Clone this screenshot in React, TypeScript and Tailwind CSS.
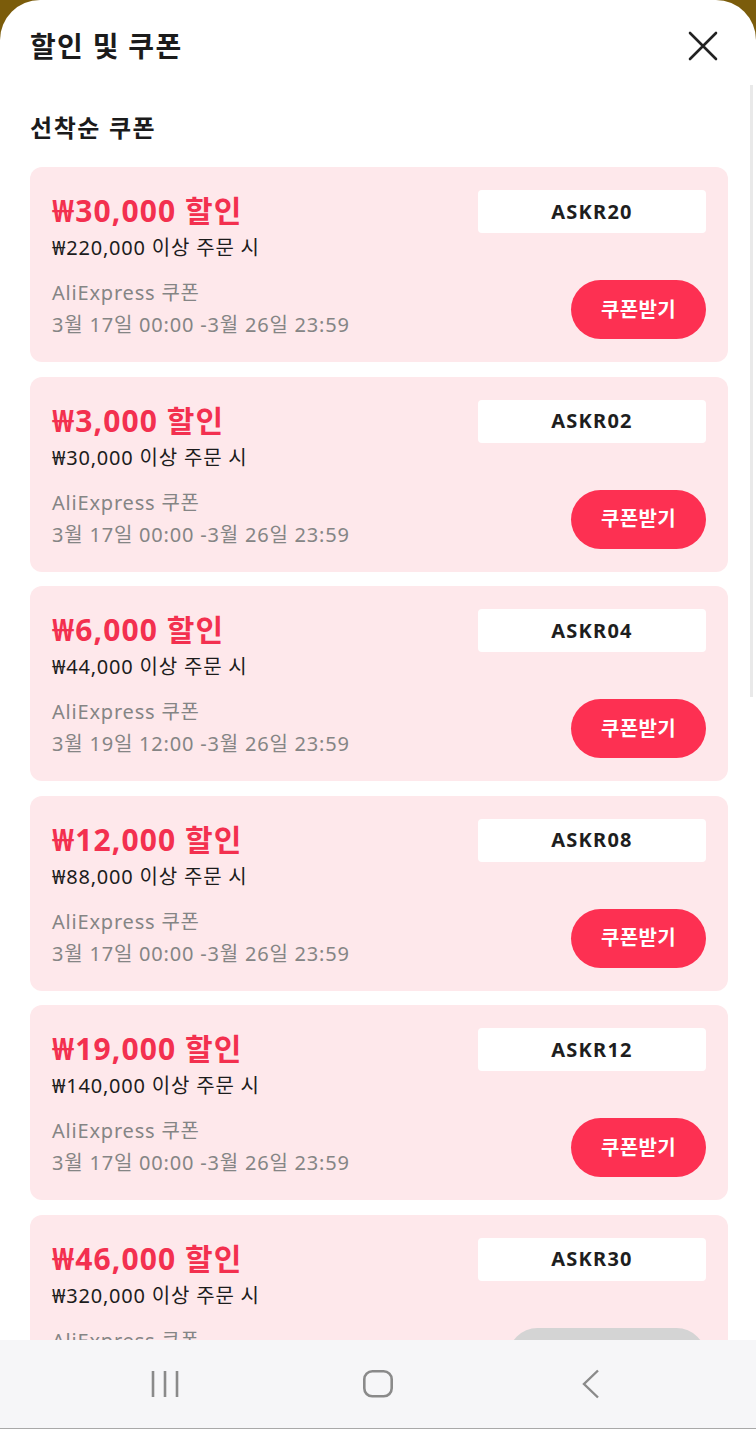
const coupons = [
  { amount: '₩30,000 할인', min: '₩220,000 이상 주문 시', code: 'ASKR20', period: '3월 17일 00:00 -3월 26일 23:59', active: true },
  { amount: '₩3,000 할인', min: '₩30,000 이상 주문 시', code: 'ASKR02', period: '3월 17일 00:00 -3월 26일 23:59', active: true },
  { amount: '₩6,000 할인', min: '₩44,000 이상 주문 시', code: 'ASKR04', period: '3월 19일 12:00 -3월 26일 23:59', active: true },
  { amount: '₩12,000 할인', min: '₩88,000 이상 주문 시', code: 'ASKR08', period: '3월 17일 00:00 -3월 26일 23:59', active: true },
  { amount: '₩19,000 할인', min: '₩140,000 이상 주문 시', code: 'ASKR12', period: '3월 17일 00:00 -3월 26일 23:59', active: true },
  { amount: '₩46,000 할인', min: '₩320,000 이상 주문 시', code: 'ASKR30', period: '3월 17일 00:00 -3월 26일 23:59', active: false },
]

type Coupon = (typeof coupons)[number]

function CouponCard({ coupon }: { coupon: Coupon }) {
  return (
    <div className="flex h-[195px] shrink-0 justify-between rounded-[12px] bg-[#fee8eb] px-[22px]">
      <div className="flex flex-col pt-[25px]">
        <div className="text-[30px] font-bold leading-[38px] tracking-[1.1px] text-[#f3304f]">{coupon.amount}</div>
        <div className="mt-[3px] text-[20px] leading-[30px] tracking-[0.8px] text-[#1c1c1c]">{coupon.min}</div>
        <div className="mt-[15px] text-[20px] leading-[30px] tracking-[0.8px] text-[#858585]">AliExpress 쿠폰</div>
        <div className="mt-[2px] text-[20px] leading-[30px] tracking-[0.8px] text-[#858585]">{coupon.period}</div>
      </div>
      <div className="flex flex-col items-end justify-between py-[23px]">
        <div className="flex h-[43px] w-[228px] items-center justify-center rounded-[4px] bg-white text-[20px] font-bold tracking-[1.2px] text-[#1e1e1e]">
          {coupon.code}
        </div>
        <button
          type="button"
          className={`flex h-[59px] items-center justify-center rounded-full text-[20px] font-bold tracking-[0.4px] text-white ${
            coupon.active ? 'w-[135px] bg-[#fd3052]' : 'w-[198px] bg-[#d4d4d4]'
          }`}
        >
          쿠폰받기
        </button>
      </div>
    </div>
  )
}

export default function App() {
  return (
    <div
      className="flex h-[1429px] w-[756px] flex-col overflow-hidden bg-[#7b5c0b]"
      style={{ fontFamily: '"Noto Sans", "Noto Sans CJK KR", sans-serif' }}
    >
      <div className="relative flex min-h-0 flex-1 flex-col overflow-hidden rounded-t-[40px] bg-white">
        {/* 헤더 */}
        <div className="flex items-center justify-between pl-[30px] pr-[38px] pt-[26px]">
          <h1 className="text-[28px] font-bold leading-[40px] tracking-[1.3px] text-[#1b1b1b]">할인 및 쿠폰</h1>
          <svg width="30" height="30" viewBox="0 0 30 30" fill="none" stroke="#222" strokeWidth="2.6" strokeLinecap="round">
            <path d="M2 2L28 28M28 2L2 28" />
          </svg>
        </div>

        <h2 className="mt-[46px] px-[30px] text-[24px] font-bold leading-[32px] tracking-[1.6px] text-[#1b1b1b]">선착순 쿠폰</h2>

        <div className="mt-[23px] flex flex-col gap-[14.5px] pl-[30px] pr-[28px]">
          {coupons.map((c) => (
            <CouponCard key={c.code} coupon={c} />
          ))}
        </div>

        {/* 스크롤바 */}
        <div className="absolute right-[3px] top-[85px] h-[612px] w-[3px] bg-[#e9e9e9]" />
      </div>

      {/* 하단 내비게이션 */}
      <div className="grid h-[89px] shrink-0 grid-cols-3 items-center justify-items-center border-b border-[#a9a9a9] bg-[#f6f6f8] px-[59px]">
        <svg width="30" height="30" viewBox="0 0 30 30" fill="none" stroke="#8a8a8a" strokeWidth="2.6">
          <path d="M3 2V28M15 2V28M27 2V28" />
        </svg>
        <svg width="32" height="30" viewBox="0 0 32 30" fill="none" stroke="#8a8a8a" strokeWidth="2.6">
          <rect x="2.3" y="2.3" width="27.4" height="25" rx="8" />
        </svg>
        <svg width="30" height="30" viewBox="0 0 30 30" fill="none" stroke="#8a8a8a" strokeWidth="2.4">
          <path d="M22 1.5L8 15L22 28.5" />
        </svg>
      </div>
    </div>
  )
}
